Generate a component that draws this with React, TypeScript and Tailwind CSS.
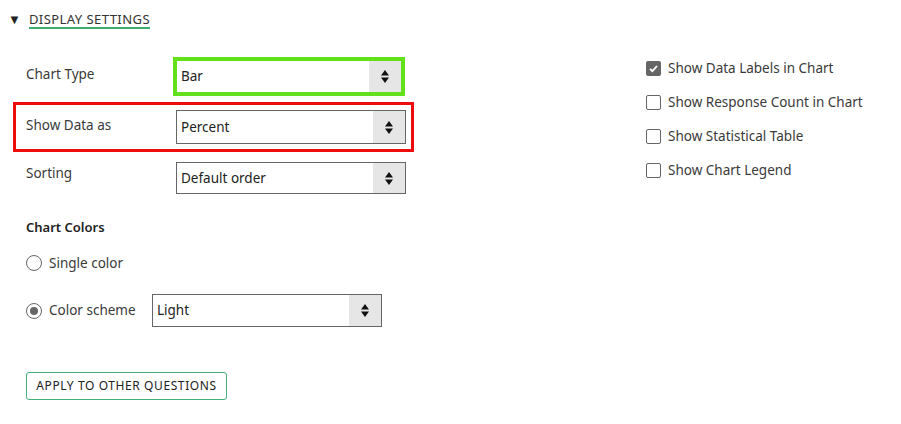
import React from "react";

const Arrows = () => (
  <svg width="10" height="15" viewBox="0 0 10 15" className="block">
    <polygon points="5,1 9,6.5 1,6.5" fill="#111" />
    <polygon points="1,8.5 9,8.5 5,14" fill="#111" />
  </svg>
);

const Select = ({ value, className }: { value: string; className: string }) => (
  <div className={"flex items-stretch bg-white " + className}>
    <span className="flex-1 flex items-center pl-[4px] text-[13.5px] text-[#222]">{value}</span>
    <span className="w-[32px] bg-[#e6e6e6] flex items-center justify-center">
      <Arrows />
    </span>
  </div>
);

const Checkbox = ({ checked, label }: { checked?: boolean; label: string }) => (
  <div className="flex items-center h-[20px] gap-[7px]">
    {checked ? (
      <span className="w-[15px] h-[15px] rounded-[2px] bg-[#666] flex items-center justify-center">
        <svg width="11" height="11" viewBox="0 0 11 11">
          <path d="M2 5.8 L4.4 8.2 L9 3" stroke="#fff" strokeWidth="1.8" fill="none" />
        </svg>
      </span>
    ) : (
      <span className="w-[15px] h-[15px] rounded-[2px] border-[1.5px] border-[#666] bg-white" />
    )}
    <span className="text-[13.5px] text-[#3a3a3a]">{label}</span>
  </div>
);

const Radio = ({ checked }: { checked?: boolean }) => (
  <span className="w-[16px] h-[16px] rounded-full border-[1.5px] border-[#666] flex items-center justify-center">
    {checked && <span className="w-[8px] h-[8px] rounded-full bg-[#666]" />}
  </span>
);

export default function App() {
  return (
    <div className="w-[901px] h-[424px] bg-white font-['Noto_Sans',sans-serif] text-[#3a3a3a]">
      <div className="flex items-center pl-[8px] pt-[9px] h-[30px] gap-[8px]">
        <span className="text-[13px] text-[#222] leading-none">▼</span>
        <span className="text-[13px] tracking-[0.45px] text-[#333] border-b-2 border-[#3dae6f] leading-[16px]">
          DISPLAY SETTINGS
        </span>
      </div>

      <div className="flex mt-[27px]">
        <div className="w-[633px]">
          <div className="flex items-center h-[39px] pl-[26px]">
            <span className="w-[147px] text-[13.5px] -mt-[5px]">Chart Type</span>
            <div className="w-[232px] h-[39px] border-4 border-[#62e11b]">
              <Select value="Bar" className="w-full h-full" />
            </div>
          </div>

          <div className="mt-[6px] ml-[13px] w-[401px] h-[50px] border-[3px] border-[#ee0b0b] flex items-center pl-[10px]">
            <span className="w-[150px] text-[13.5px] -mt-[3px]">Show Data as</span>
            <Select value="Percent" className="w-[230px] h-[34px] border border-[#666]" />
          </div>

          <div className="mt-[10px] flex items-center h-[32px] pl-[26px]">
            <span className="w-[150px] text-[13.5px] -mt-[10px]">Sorting</span>
            <Select value="Default order" className="w-[230px] h-[32px] border border-[#666]" />
          </div>

          <div className="mt-[24px] pl-[26px] text-[13px] font-semibold text-[#222] h-[18px] leading-[18px]">
            Chart Colors
          </div>

          <div className="mt-[17px] pl-[26px] flex items-center gap-[7px] h-[20px]">
            <Radio />
            <span className="text-[13.5px]">Single color</span>
          </div>

          <div className="mt-[21px] pl-[26px] flex items-center h-[33px]">
            <div className="w-[126px] flex items-center gap-[7px]">
              <Radio checked />
              <span className="text-[13.5px]">Color scheme</span>
            </div>
            <Select value="Light" className="w-[230px] h-[33px] border border-[#666]" />
          </div>

          <div className="mt-[45px] pl-[26px]">
            <button className="w-[201px] h-[28px] border border-[#45b07a] rounded-[3px] text-[12px] tracking-[0.6px] text-[#222] bg-white">
              APPLY TO OTHER QUESTIONS
            </button>
          </div>
        </div>

        <div className="pl-[13px] pt-[1px] flex flex-col gap-[14px]">
          <Checkbox checked label="Show Data Labels in Chart" />
          <Checkbox label="Show Response Count in Chart" />
          <Checkbox label="Show Statistical Table" />
          <Checkbox label="Show Chart Legend" />
        </div>
      </div>
    </div>
  );
}
